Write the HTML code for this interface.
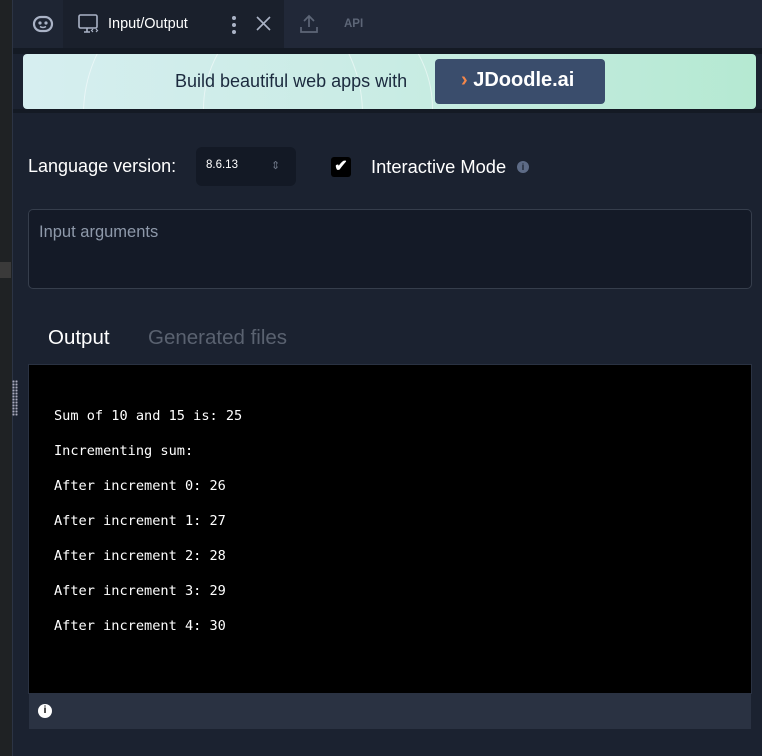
<!DOCTYPE html>
<html><head><style>
*{margin:0;padding:0;box-sizing:border-box}
body{width:762px;height:756px;background:#1b2230;font-family:"Liberation Sans",sans-serif;position:relative;overflow:hidden}
.abs{position:absolute}
.mono{font-family:"DejaVu Sans Mono","Liberation Mono",monospace;font-size:13.6px;color:#fff}
</style></head><body>
<div class="abs" style="left:0;top:0;width:12px;height:756px;background:#1f2224"></div>
<div class="abs" style="left:0;top:262px;width:11px;height:16px;background:#3a3a3a"></div>
<div class="abs" style="left:12px;top:0;width:1px;height:756px;background:#2c3444"></div>
<div class="abs" style="left:12px;top:380px;width:6px;height:36px;background-image:radial-gradient(#aab 1px,transparent 1.2px);background-size:3px 3px"></div>
<div class="abs" style="left:13px;top:0;width:749px;height:48px;background:#212838"></div>
<div class="abs" style="left:13px;top:0;width:50px;height:48px;background:#1e2533"></div>
<svg class="abs" style="left:32px;top:14px" width="22" height="20" viewBox="0 0 22 20"><rect x="2" y="3" width="18" height="14" rx="7" fill="none" stroke="#aab3c6" stroke-width="2.2"/><circle cx="8" cy="9" r="1.6" fill="#aab3c6"/><circle cx="14" cy="9" r="1.6" fill="#aab3c6"/><path d="M8 12.5q3 2 6 0" stroke="#aab3c6" stroke-width="1.4" fill="none"/></svg>
<div class="abs" style="left:63px;top:0;width:221px;height:48px;background:#1a202c"></div>
<svg class="abs" style="left:78px;top:14px" width="22" height="20" viewBox="0 0 22 20"><rect x="1" y="1" width="18" height="13" rx="1.5" fill="none" stroke="#aab3c6" stroke-width="1.6"/><path d="M6 18h6M9 14v4" stroke="#aab3c6" stroke-width="1.6"/><path d="M15 15l-1.5 1.5L15 18M18 15l1.5 1.5L18 18" stroke="#aab3c6" stroke-width="1.2" fill="none"/></svg>
<div class="abs" style="left:108px;top:16px;font-size:14.5px;color:#fff">Input/Output</div>
<div class="abs" style="left:232px;top:16px;width:4px;height:4px;border-radius:2px;background:#aab3c6;box-shadow:0 7px 0 #aab3c6,0 14px 0 #aab3c6"></div>
<svg class="abs" style="left:256px;top:16px" width="15" height="15"><path d="M1 1l13 13M14 1L1 14" stroke="#aab3c6" stroke-width="1.6"/></svg>
<svg class="abs" style="left:299px;top:14px" width="20" height="20"><path d="M10 2v11M5 7l5-5 5 5M2 13v5h16v-5" stroke="#5d6677" stroke-width="1.7" fill="none"/></svg>
<div class="abs" style="left:344px;top:18px;font-size:11.5px;color:#5d6677;font-weight:bold">API</div>
<div class="abs" style="left:13px;top:48px;width:749px;height:6px;background:#141a24"></div>
<div class="abs" style="left:23px;top:54px;width:733px;height:55px;border-radius:4px;background:linear-gradient(90deg,#d6eef0,#c9ece4 50%,#b5e9d2);overflow:hidden">
<div class="abs" style="left:60px;top:-80px;width:280px;height:280px;border-radius:50%;border:1px solid rgba(255,255,255,.5)"></div>
<div class="abs" style="left:180px;top:-60px;width:230px;height:230px;border-radius:50%;border:1px solid rgba(255,255,255,.5)"></div>
<div class="abs" style="left:152px;top:17px;font-size:18px;color:#1b2a3e">Build beautiful web apps with</div>
<div class="abs" style="left:412px;top:5px;width:170px;height:45px;border-radius:4px;background:#3a4d6c"></div>
<div class="abs" style="left:438px;top:15px;font-size:20px;font-weight:bold;color:#fff"><span style="color:#f5874a">›</span> JDoodle.ai</div>
</div>
<div class="abs" style="left:13px;top:109px;width:749px;height:4px;background:#141a24"></div>
<div class="abs" style="left:28px;top:156px;font-size:18px;color:#fff">Language version:</div>
<div class="abs" style="left:196px;top:147px;width:100px;height:39px;border-radius:6px;background:#131925"></div>
<div class="abs" style="left:206px;top:159px;font-size:11.5px;color:#fff">8.6.13</div>
<div class="abs" style="left:271px;top:159px;font-size:11px;color:#6c7585">⇕</div>
<div class="abs" style="left:331px;top:157px;width:20px;height:20px;background:#000;border-radius:3px;color:#fff;font-size:16px;text-align:center;line-height:20px;font-weight:bold">✔</div>
<div class="abs" style="left:371px;top:156px;font-size:18.3px;color:#fff">Interactive Mode</div>
<div class="abs" style="left:517px;top:161px;width:12px;height:12px;border-radius:50%;background:#5d6b86;color:#1b2230;font-size:9px;text-align:center;line-height:12px;font-weight:bold">i</div>
<div class="abs" style="left:28px;top:209px;width:724px;height:80px;border:1px solid #363e4c;border-radius:5px;background:#141a27"></div>
<div class="abs" style="left:39px;top:223px;font-size:16.5px;color:#8e99aa">Input arguments</div>
<div class="abs" style="left:48px;top:326px;font-size:20.5px;color:#fff">Output</div>
<div class="abs" style="left:148px;top:326px;font-size:20.5px;color:#5a6270">Generated files</div>
<div class="abs" style="left:28px;top:364px;width:724px;height:330px;background:#000;border:1px solid #2a3242"></div>
<div class="abs mono" style="left:54px;top:399px;line-height:35px;white-space:pre">Sum of 10 and 15 is: 25
Incrementing sum:
After increment 0: 26
After increment 1: 27
After increment 2: 28
After increment 3: 29
After increment 4: 30</div>
<div class="abs" style="left:29px;top:693px;width:722px;height:36px;background:#2a3242"></div>
<div class="abs" style="left:38px;top:704px;width:14px;height:14px;border-radius:50%;background:#fff;color:#000;font-size:10px;text-align:center;line-height:14px;font-weight:bold">i</div>
</body></html>
